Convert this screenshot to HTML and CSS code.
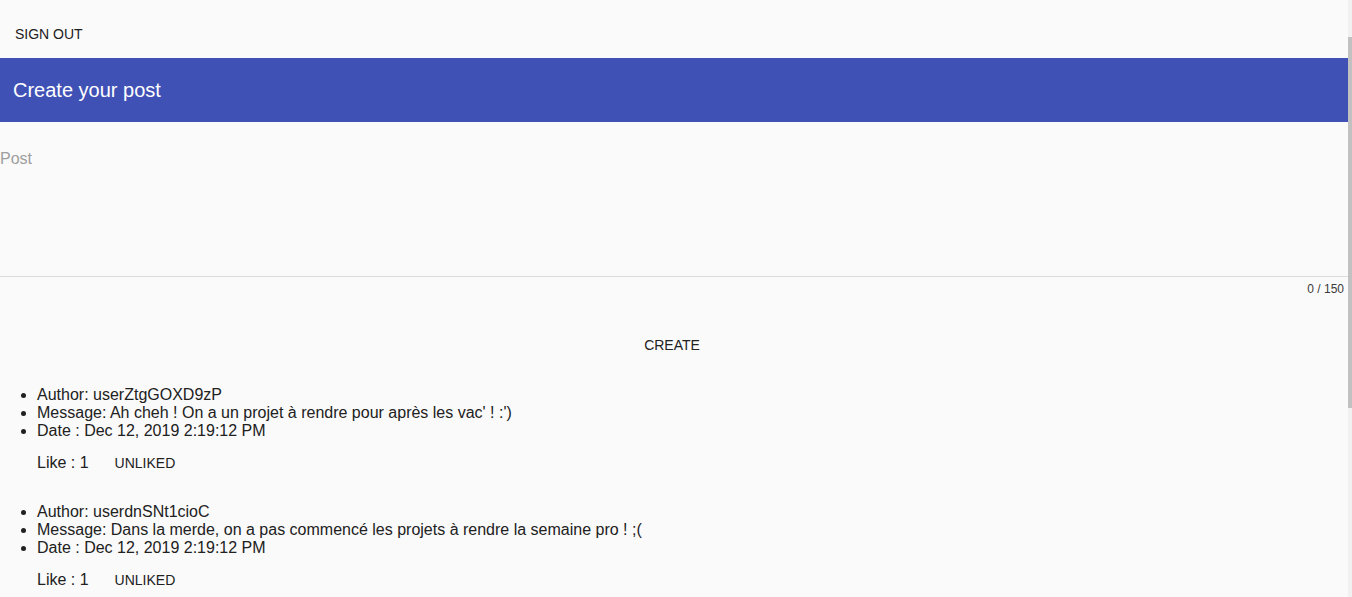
FILE: index.html
```html
<!DOCTYPE html>
<html lang="fr">
<head>
<meta charset="utf-8">
<title>Posts</title>
<link rel="stylesheet" href="styles.css">
</head>
<body>
<div class="page">
  <div class="topbar">
    <button class="mat-btn">SIGN OUT</button>
  </div>
  <header class="toolbar">Create your post</header>
  <div class="field">
    <textarea class="post-input" placeholder="Post"></textarea>
    <div class="hint">0 / 150</div>
  </div>
  <div class="actions">
    <button class="mat-btn">CREATE</button>
  </div>
  <section class="post">
    <ul class="post-info">
      <li>Author: userZtgGOXD9zP</li>
      <li>Message: Ah cheh ! On a un projet à rendre pour après les vac' ! :')</li>
      <li>Date : Dec 12, 2019 2:19:12 PM</li>
    </ul>
    <div class="like-row">
      <span class="likes">Like : 1</span>
      <button class="mat-btn">UNLIKED</button>
    </div>
  </section>
  <section class="post">
    <ul class="post-info">
      <li>Author: userdnSNt1cioC</li>
      <li>Message: Dans la merde, on a pas commencé les projets à rendre la semaine pro ! ;(</li>
      <li>Date : Dec 12, 2019 2:19:12 PM</li>
    </ul>
    <div class="like-row">
      <span class="likes">Like : 1</span>
      <button class="mat-btn">UNLIKED</button>
    </div>
  </section>
</div>
<div class="scrollbar"><div class="scrollbar-thumb"></div></div>
</body>
</html>
```

FILE: styles.css
```css
html, body {
  margin: 0;
  padding: 0;
  height: 100%;
  overflow: hidden;
  background: #fafafa;
}

body {
  font-family: "Liberation Sans", Arial, sans-serif;
  color: #212121;
  font-size: 16px;
}

.page {
  margin-right: 4px;
}

.mat-btn {
  font-family: "Liberation Sans", Arial, sans-serif;
  font-size: 14px;
  color: #212121;
  background: transparent;
  border: none;
  height: 36px;
  line-height: 36px;
  padding: 0 16px;
  min-width: 64px;
  margin: 0;
  cursor: pointer;
}

.topbar {
  padding-top: 16px;
  margin-bottom: 6px;
  height: 36px;
}

.topbar .mat-btn {
  padding-left: 15px;
}

.toolbar {
  height: 64px;
  background: #3f51b5;
  color: #ffffff;
  font-size: 20px;
  display: flex;
  align-items: center;
  padding-left: 13px;
}

.field {
  padding-top: 28px;
}

.post-input {
  display: block;
  width: 100%;
  box-sizing: border-box;
  height: 127px;
  margin: 0;
  padding: 0;
  border: none;
  border-bottom: 1px solid #dcdcdc;
  background: transparent;
  resize: none;
  outline: none;
  font-family: "Liberation Sans", Arial, sans-serif;
  font-size: 16px;
  color: #212121;
}

.post-input::placeholder {
  color: #9e9e9e;
}

.hint {
  margin-top: 5px;
  padding-right: 4px;
  text-align: right;
  font-size: 12px;
  color: #3a3a3a;
}

.actions {
  margin-top: 31px;
  padding-right: 4px;
  text-align: center;
  height: 36px;
}

.post {
  margin-top: 22px;
}

.post:first-of-type {
  margin-top: 23px;
}

.post-info {
  margin: 0;
  padding-left: 37px;
}

.like-row {
  margin-top: 5px;
  padding-left: 37px;
  display: flex;
  align-items: baseline;
  gap: 10px;
}

.scrollbar {
  position: fixed;
  top: 0;
  right: 0;
  width: 4px;
  height: 100%;
  background: #f1f1f1;
}

.scrollbar-thumb {
  position: absolute;
  top: 37px;
  left: 0;
  width: 4px;
  height: 371px;
  background: #c1c1c1;
}
```
